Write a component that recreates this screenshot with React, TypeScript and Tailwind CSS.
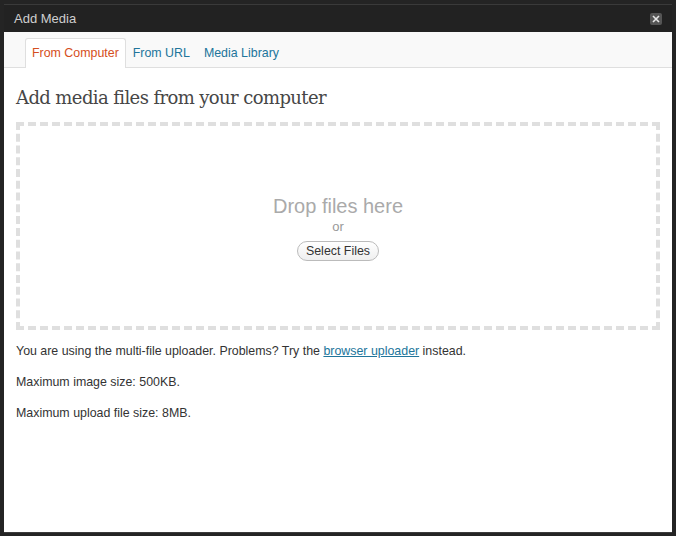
import { useState } from 'react';

const tabs = ['From Computer', 'From URL', 'Media Library'];

const App = () => {
  const [active, setActive] = useState(0);

  return (
    <div className="w-[676px] h-[536px] bg-[#242424] pt-1 px-1 pb-[3px] font-['Liberation_Sans',Arial,sans-serif]">
      <div className="flex flex-col h-full border-b border-[#3c3c3c]">
        {/* Title bar */}
        <div className="h-7 flex items-center justify-between pl-[10px] pr-[10px] bg-[#222222] border-t border-[#3a3a3a]">
          <span className="text-[13px] text-[#cfcfcf]">Add Media</span>
          <button className="w-3 h-3 rounded-[2px] bg-[#555555] flex items-center justify-center">
            <svg width="8" height="8" viewBox="0 0 8 8">
              <path d="M1 1 L7 7 M7 1 L1 7" stroke="#e6e6e6" strokeWidth="1.6" />
            </svg>
          </button>
        </div>

        {/* Tabs */}
        <div className="h-9 flex items-end pl-[21px] bg-[#f9f9f9] border-b border-[#dfdfdf]">
          {tabs.map((tab, i) => (
            <button
              key={tab}
              onClick={() => setActive(i)}
              className={`h-[30px] px-[6px] -mb-px text-[12.4px] ${
                active === i
                  ? 'bg-white border border-b-0 border-[#dfdfdf] rounded-t-[3px] text-[#d54e21]'
                  : 'text-[#21759b] border border-transparent'
              }`}
            >
              {tab}
            </button>
          ))}
        </div>

        {/* Content */}
        <div className="flex-1 bg-white px-3 pt-[18px]">
          <h3 className="text-[18px] leading-6 text-[#464646] font-['DejaVu_Serif',Georgia,serif] tracking-[-0.6px]">
            Add media files from your computer
          </h3>

          <div className="mt-[12px] h-[208px] pt-[2px] border-4 border-dashed border-[#dfdfdf] flex flex-col items-center justify-center">
            <p className="text-[20px] leading-6 text-[#aaaaaa]">Drop files here</p>
            <p className="mt-[1px] text-[13px] leading-4 text-[#999999]">or</p>
            <button className="mt-[6px] h-[20px] px-2 rounded-full border border-[#bbbbbb] bg-gradient-to-b from-white to-[#efefef] text-[12.4px] text-[#333333]">
              Select Files
            </button>
          </div>

          <div className="mt-[13px] text-[12.4px] leading-4 text-[#333333] flex flex-col gap-[15px]">
            <p>
              You are using the multi-file uploader. Problems? Try the{' '}
              <a href="#" className="text-[#21759b] underline">browser uploader</a> instead.
            </p>
            <p>Maximum image size: 500KB.</p>
            <p>Maximum upload file size: 8MB.</p>
          </div>
        </div>
      </div>
    </div>
  );
};

export default App;
